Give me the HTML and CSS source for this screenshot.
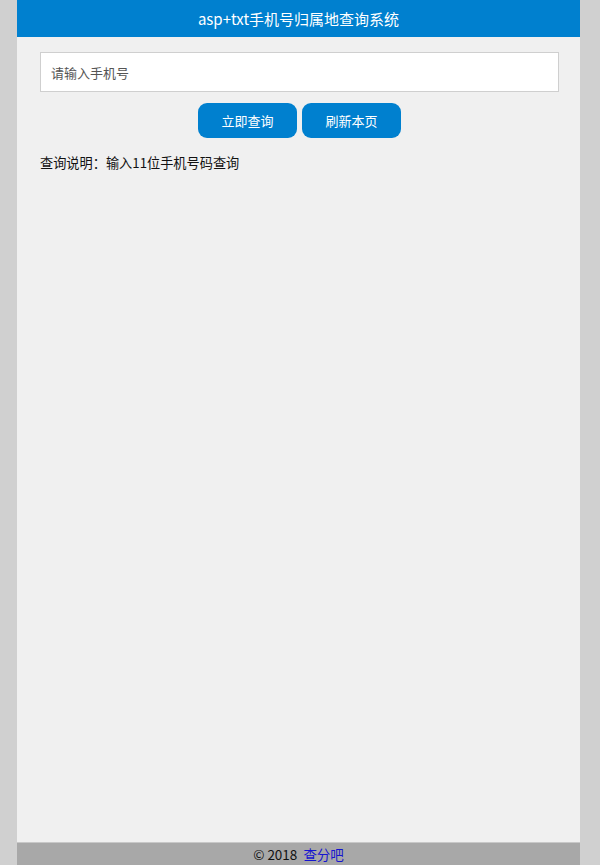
FILE: index.html
```html
<!DOCTYPE html>
<html lang="zh-CN">
<head>
<meta charset="utf-8">
<title>asp+txt手机号归属地查询系统</title>
<link rel="stylesheet" href="styles.css">
</head>
<body>
<div class="page">
  <header class="topbar">asp+txt手机号归属地查询系统</header>
  <main class="content">
    <input class="phone" type="text" placeholder="请输入手机号">
    <div class="actions">
      <button class="btn">立即查询</button>
      <button class="btn">刷新本页</button>
    </div>
    <p class="note">查询说明：输入11位手机号码查询</p>
  </main>
  <footer class="footer">© 2018 <a href="#">查分吧</a></footer>
</div>
</body>
</html>
```
FILE: styles.css
```css
html, body {
  margin: 0;
  padding: 0;
  height: 100%;
}
body {
  background: #d0d0d0;
  font-family: "Noto Sans CJK SC", "Microsoft YaHei", sans-serif;
}
.page {
  margin-left: 17px;
  width: 563px;
  min-height: 100vh;
  background: #f0f0f0;
  display: flex;
  flex-direction: column;
}
.topbar {
  height: 37px;
  line-height: 37px;
  background: #0080cf;
  color: #fff;
  text-align: center;
  font-size: 15px;
}
.content {
  flex: 1;
  padding: 15px 21px 0 23px;
}
.phone {
  display: block;
  box-sizing: border-box;
  width: 100%;
  height: 40px;
  border: 1px solid #cfcfcf;
  background: #fff;
  padding: 0 10px;
  font-family: inherit;
  font-size: 13px;
  outline: none;
}
.phone::placeholder {
  color: #555;
}
.actions {
  display: flex;
  justify-content: center;
  gap: 5px;
  margin-top: 11px;
}
.btn {
  width: 99px;
  height: 35px;
  border: none;
  border-radius: 9px;
  background: #0080cf;
  color: #fff;
  font-family: inherit;
  font-size: 13px;
  padding: 0;
}
.note {
  margin: 15px 0 0;
  font-size: 13.2px;
  color: #111;
}
.footer {
  height: 23px;
  line-height: 23px;
  background: #a8a8a8;
  text-align: center;
  font-size: 13.5px;
  color: #111;
  border-top: 1px solid #c8c8c8;
  box-sizing: border-box;
}
.footer a {
  color: #1515d0;
  text-decoration: none;
  margin-left: 3px;
}
```
